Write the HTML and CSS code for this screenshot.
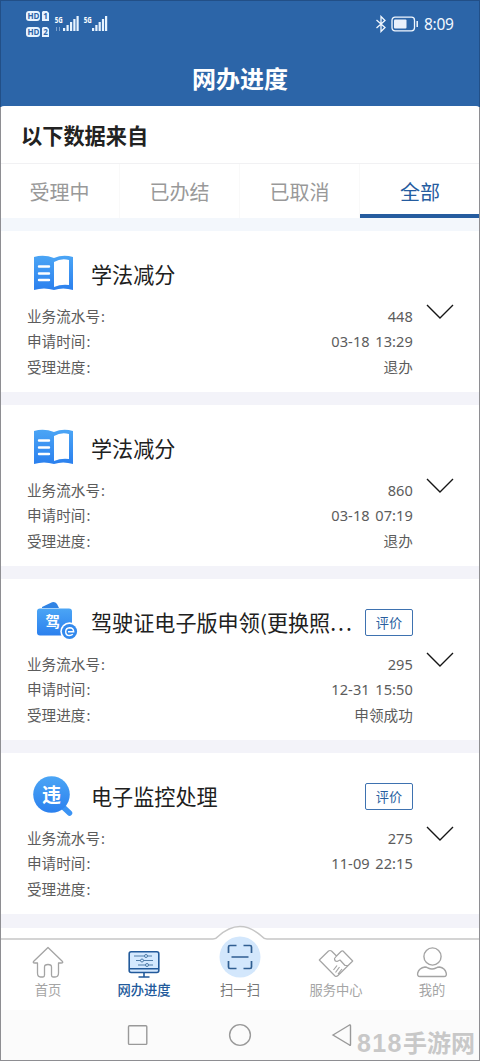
FILE: index.html
```html
<!DOCTYPE html>
<html lang="zh-CN">
<head>
<meta charset="utf-8">
<title>网办进度</title>
<link rel="stylesheet" href="styles.css">
</head>
<body>
<svg class="defs" width="0" height="0" aria-hidden="true">
  <defs>
    <linearGradient id="blue" x1="0" y1="0" x2="0" y2="1"><stop offset="0" stop-color="#4ba5f5"/><stop offset="1" stop-color="#2b80ee"/></linearGradient>
    <symbol id="book" viewBox="0 0 48 44">
      <path d="M4 5Q14 2 24 6Q33 2 43 5V38Q33 35 24 38Q14 35 4 38Z" fill="url(#blue)"/>
      <path d="M24 10Q31 6 39 8V33Q31 32 24 35Z" fill="#fff"/>
      <path d="M9 14.500H19M9 21.500H19M9 28H19" stroke="#fff" stroke-width="2.4" stroke-linecap="round"/>
    </symbol>
    <symbol id="down" viewBox="0 0 28 16"><path d="M1 1L14 14L27 1" fill="none" stroke="#151515" stroke-width="1.4"/></symbol>
  </defs>
</svg>
<div class="phone">
  <header class="header">
    <div class="status">
      <svg class="signals" width="84" height="30" viewBox="0 0 84 30">
        <g fill="#e8f4ff"><rect x="0" y="1" width="14" height="10" rx="3"/><path d="M17 1h4l2 2v8h-7V2z"/><rect x="0" y="17" width="14" height="10" rx="3"/><path d="M17 17h4l2 2v8h-7v-9z"/>
        <path d="M37 18h2.200v3H37zM40.500 15h2.200v6h-2.200zM44 12h2.200v9H44zM47.300 9h2.200v12h-2.200zM50.500 6h2.200v15h-2.200zM66 18h2.200v3H66zM69.300 15h2.200v6h-2.200zM72.600 12h2.200v9h-2.200zM75.900 9h2.200v12h-2.200zM79 6h2.200v15h-2.200z"/></g>
        <g class="tiny"><text x="1.500" y="8.900" fill="#2c65a8">HD</text><text x="17.300" y="8.900" fill="#2c65a8">1</text><text x="1.500" y="24.900" fill="#2c65a8">HD</text><text x="17.300" y="24.900" fill="#2c65a8">2</text><text x="28.800" y="12.500" fill="#fff" textLength="8" lengthAdjust="spacingAndGlyphs">5G</text><text x="57.800" y="12.500" fill="#fff" textLength="8" lengthAdjust="spacingAndGlyphs">5G</text></g>
        <path d="M30.500 17v4M33.500 17v4" stroke="#7aa0cd"/>
      </svg>
      <div class="status-right">
        <svg width="12" height="18" viewBox="0 0 12 18"><path d="M1.500 5L10 12.500L6 16.500V1.500L10 5.500L1.500 13" fill="none" stroke="#f2f8ff" stroke-width="1.300"/></svg>
        <svg width="28" height="16" viewBox="0 0 28 16"><rect x="1" y="1.200" width="22.500" height="13.600" rx="3" fill="none" stroke="#f2f8ff" stroke-width="1.300"/><rect x="3" y="3.500" width="12.500" height="9" rx="1" fill="#e9f0fb"/><path d="M26.200 5v6" stroke="#f2f8ff" stroke-width="1.500"/></svg>
        <span class="clock">8:09</span>
      </div>
    </div>
    <h1 class="page-title">网办进度</h1>
  </header>
  <section class="source">以下数据来自</section>
  <nav class="tabs"><span>受理中</span><span>已办结</span><span>已取消</span><span class="active">全部</span></nav>
  <main class="list">
    <article class="item">
      <div class="item-head"><svg class="icon" width="48" height="44"><use href="#book"/></svg><h2>学法减分</h2></div>
      <div class="rows"><p><span>业务流水号<i>:</i></span><b>448</b></p><p><span>申请时间<i>:</i></span><b>03-18 13:29</b></p><p><span>受理进度<i>:</i></span><b>退办</b></p></div>
      <svg class="chevron" width="28" height="16"><use href="#down"/></svg>
    </article>
    <article class="item">
      <div class="item-head"><svg class="icon" width="48" height="44"><use href="#book"/></svg><h2>学法减分</h2></div>
      <div class="rows"><p><span>业务流水号<i>:</i></span><b>860</b></p><p><span>申请时间<i>:</i></span><b>03-18 07:19</b></p><p><span>受理进度<i>:</i></span><b>退办</b></p></div>
      <svg class="chevron" width="28" height="16"><use href="#down"/></svg>
    </article>
    <article class="item">
      <div class="item-head">
        <svg class="icon" width="48" height="44" viewBox="0 0 48 44"><path d="M12 7L22 2.200Q25 1.200 27 4L29 8H12Z" fill="#2f83e4"/><rect x="7" y="8.500" width="35" height="27" rx="3" fill="url(#blue)"/><text x="15.500" y="26.500" class="glyph" font-size="14.500">驾</text><circle cx="39.500" cy="31.500" r="9.200" fill="#fff"/><circle cx="39.500" cy="31.500" r="7.600" fill="#3289ed"/><path d="M38 31.800H43.700Q43.500 27.700 39.700 27.700Q35.700 28 35.700 31.700Q35.700 35.500 39.400 35.500Q41.400 35.500 42.800 34.200" fill="none" stroke="#fff" stroke-width="1.400"/></svg>
        <h2>驾驶证电子版申领(更换照<em>...</em></h2><span class="rate">评价</span></div>
      <div class="rows"><p><span>业务流水号<i>:</i></span><b>295</b></p><p><span>申请时间<i>:</i></span><b>12-31 15:50</b></p><p><span>受理进度<i>:</i></span><b>申领成功</b></p></div>
      <svg class="chevron" width="28" height="16"><use href="#down"/></svg>
    </article>
    <article class="item">
      <div class="item-head">
        <svg class="icon" width="48" height="44" viewBox="0 0 48 44"><path d="M32 32L39.500 39" stroke="#3c94f4" stroke-width="5.500" stroke-linecap="round"/><circle cx="21.500" cy="20.500" r="18.300" fill="url(#blue)"/><text x="12" y="27.500" class="glyph" font-size="19">违</text></svg>
        <h2>电子监控处理</h2><span class="rate">评价</span></div>
      <div class="rows"><p><span>业务流水号<i>:</i></span><b>275</b></p><p><span>申请时间<i>:</i></span><b>11-09 22:15</b></p><p><span>受理进度<i>:</i></span><b></b></p></div>
      <svg class="chevron" width="28" height="16"><use href="#down"/></svg>
    </article>
  </main>
  <footer class="tabbar">
    <svg class="edge" width="480" height="18" viewBox="0 0 480 18"><path d="M0 14H216Q240 -11 264 14H480V18H0Z" fill="#fff"/><path d="M0 14H213Q216 14 218 11.500Q240 -8.500 262 11.500Q264 14 267 14H480" fill="none" stroke="#c6c6c6" stroke-width="1.500"/></svg>
    <div class="entry"><svg width="34" height="36" viewBox="0 0 34 36"><path d="M17 2.500L31 16Q33 18 30 18H27.500V28Q27.500 32 24 32H22Q20.500 32 20.500 30V22Q20.500 19.500 17 19.500Q13.500 19.500 13.500 22V30Q13.500 32 12 32H9.500Q6.500 32 6.500 28V18H4Q1 18 3 16Z" fill="none" stroke="#a4a4a4" stroke-width="1.300" stroke-linejoin="round"/></svg><span>首页</span></div>
    <div class="entry current"><svg width="34" height="36" viewBox="0 0 34 36"><rect x="2.200" y="6.700" width="29.600" height="20.800" rx="2" fill="#d4e9ff" stroke="#225a9b" stroke-width="1.600"/><path d="M2.500 23.700H31.500M17 27.500V31.500M11.500 32H22.500" fill="none" stroke="#225a9b" stroke-width="1.600"/><g fill="#d4e9ff" stroke="#42719f" stroke-width=".9"><path d="M7 11H25M9 15.500H26M11 20H26"/><circle cx="19" cy="11" r="1.500"/><circle cx="15" cy="15.500" r="1.500"/><circle cx="20" cy="20" r="1.500"/></g></svg><span>网办进度</span></div>
    <div class="entry scan"><svg width="42" height="42" viewBox="0 0 42 42"><circle cx="21" cy="21" r="20.500" fill="#d3e7fc"/><path d="M17.500 9.500H11Q9.500 9.500 9.500 11V17M24.500 9.500H31Q32.500 9.500 32.500 11V17M9.500 25V31Q9.500 32.500 11 32.500H17.500M24.500 32.500H31Q32.500 32.500 32.500 31V25M12.500 21H29.500" fill="none" stroke="#305e91" stroke-width="1.700"/></svg><span>扫一扫</span></div>
    <div class="entry"><svg width="38" height="36" viewBox="0 0 38 36"><path d="M11.500 6L2.300 15L18 31Q19.500 32 21 30.500L35.700 16L26 6Q25 5.500 24 6.500L19.500 11L14.500 6Q13 5 11.500 6ZM19.500 11L17.500 13.500Q17.500 16.500 20 16.500L23 15L28 20.500L31 20.500M16.500 25L20 20.500M18.500 27.500L22.500 22M21 29L25 24" fill="none" stroke="#a4a4a4" stroke-width="1.200" stroke-linejoin="round"/></svg><span>服务中心</span></div>
    <div class="entry"><svg width="34" height="36" viewBox="0 0 34 36"><circle cx="17.500" cy="11.500" r="8.600" fill="none" stroke="#a4a4a4" stroke-width="1.400"/><path d="M10 22Q4 23 2.700 28Q2 31.500 5 31.500H29Q32 31.500 31.200 28Q30 23 24.500 22Q22.500 22 21 23Q17 25 13 23Q11.500 22 10 22Z" fill="none" stroke="#a4a4a4" stroke-width="1.400"/></svg><span>我的</span></div>
  </footer>
  <div class="system"><svg width="240" height="30" viewBox="0 0 240 30" fill="none" stroke="#999" stroke-width="1.400"><rect x="8.500" y="5.700" width="18.300" height="18.700" rx="1"/><circle cx="120" cy="15" r="10.400"/><path d="M213 15L229.500 5Q230.500 4.500 230.500 6V24.500Q230.500 26 229.500 25Z"/></svg></div>
  <div class="watermark"><span>818</span>手游网</div>
</div>
</body>
</html>
```
FILE: styles.css
```css
* { box-sizing: border-box; }
body { margin: 0; font-family: "Noto Sans", "Noto Sans CJK SC", sans-serif; background: #fff; }
h1, h2, p { margin: 0; font-weight: 400; }
b { font-weight: 400; }
i, em { font-style: normal; }
.defs { position: absolute; }
.phone { position: relative; width: 480px; height: 1061px; overflow: hidden; background: #f3f3f9; display: flex; flex-direction: column; }
.phone::after { content: ""; position: absolute; z-index: 2; inset: 107px 0 0; border: 1px solid #8e8e92; border-top: 0; pointer-events: none; }
.phone::before { content: ""; position: absolute; z-index: 2; inset: 0 0 auto; height: 107px; border: 1px solid #224f87; border-bottom: 0; }
.header { flex: none; height: 110px; margin-bottom: -4px; background: #2c65a8; color: #fff; }
.status { height: 50px; padding: 10px 26px 0; display: flex; justify-content: space-between; }
.tiny { font-family: "Open Sans", sans-serif; font-weight: 700; }
.tiny text { font-size: 8px; }
.status-right { display: flex; align-items: center; height: 28px; gap: 4px; color: #f2f8ff; }
.clock { font-size: 15.500px; width: 30px; margin-left: 1px; letter-spacing: -.3px; white-space: nowrap; }
.page-title { font: 700 24px/56px "Noto Sans CJK SC", sans-serif; text-align: center; }
.source { flex: none; height: 58px; padding-left: 21px; background: #fff; font: 700 21.200px/58px "Noto Sans CJK SC", sans-serif; color: #222; border-bottom: 1px solid #f1f1f3; border-radius: 4px 4px 0 0; }
.tabs { flex: none; height: 54px; display: grid; grid-template: 54px / repeat(4, 1fr); background: #fff; font: 400 20px/56px "Noto Sans CJK SC", sans-serif; color: #999; text-align: center; }
.tabs span { border-right: 1px solid #f9f9f9; }
.tabs .active { border: 0; border-bottom: 4px solid #255c9f; color: #255c9f; }
.list { flex: none; border-top: 13px solid #f3f7fc; display: grid; gap: 13px; height: 710px; grid-auto-rows: 161px; align-content: start; }
.item { background: #fff; padding: 21px 27px 0; display: grid; grid-template-columns: 386px 28px; grid-template-rows: 52px 76px; column-gap: 13px; }
.item-head { grid-column: 1 / -1; display: flex; width: 386px; height: 44px; align-items: center; }
.icon { margin-left: 3px; margin-right: 13px; flex: none; }
.glyph { font-family: "Noto Sans CJK SC", sans-serif; font-weight: 700; fill: #fff; }
h2 { font: 400 21.100px/44px "Noto Sans CJK SC", sans-serif; color: #202020; white-space: nowrap; flex: 1; }
h2 em { letter-spacing: 2px; }
.rate { flex: none; width: 48px; height: 27px; border: 1px solid #3e72b0; border-radius: 2px; color: #285f9f; font: 400 13.200px/25px "Noto Sans CJK SC", sans-serif; text-align: center; }
.rows { display: grid; grid-template-rows: repeat(3, 25.300px); color: #5c5c5c; font: 400 14.600px/25px "Noto Sans", "Noto Sans CJK SC", sans-serif; }
.rows p { display: flex; justify-content: space-between; }
.rows i { margin-left: 1px; }
.rows b { letter-spacing: .1px; word-spacing: 1.500px; }
.chevron { margin-top: 0; }
.tabbar { position: relative; z-index: 1; flex: none; height: 72px; margin-top: 10px; background: #fff; display: grid; grid-template-columns: repeat(5, 96px); box-shadow: 0 -10px 0 #fff; }
.edge { position: absolute; left: 0; top: -13px; }
.entry { position: relative; display: flex; flex-direction: column; align-items: center; padding-top: 7px; color: #a5a5a5; font: 400 13.300px/18px "Noto Sans CJK SC", sans-serif; }
.entry svg { flex: none; }
.entry.current { color: #225a9b; font-weight: 500; }
.entry.scan { padding-top: 0; color: #777; }
.entry.scan svg { margin-top: -2px; }
.entry.scan span { margin-top: 3px; }
.system { flex: 1; background: #fbfbfb; padding-top: 10px; padding-left: 120px; }
.watermark { position: absolute; left: 357px; top: 1025px; font: 700 24px/34px "Noto Sans CJK SC", sans-serif; color: #c8c8c8; white-space: nowrap; }
.watermark span { font-family: "Liberation Sans", sans-serif; font-size: 25px; letter-spacing: 1.400px; }
```
